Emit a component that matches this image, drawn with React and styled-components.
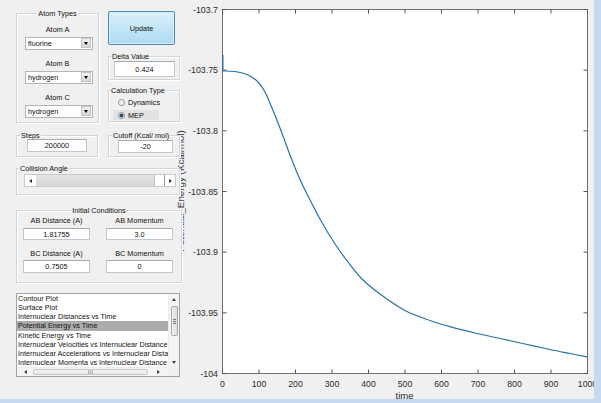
import React from 'react';
import styled, { createGlobalStyle, css } from 'styled-components';

const Global = createGlobalStyle`
  html, body { margin: 0; padding: 0; background: #f0f0f0; }
  #root { width: 601px; height: 403px; }
  *, *::before, *::after { box-sizing: border-box; }
`;

const Window = styled.div`
  width: 601px;
  height: 403px;
  background: #f0f0f0;
  border-right: 7px solid #c6d9f0;
  border-bottom: 4px solid #c6d9f0;
  display: flex;
  font-family: "Liberation Sans", Arial, sans-serif;
  font-size: 7.3px;
  color: #111;
  overflow: hidden;
`;

const Controls = styled.div`
  position: relative;
  z-index: 1;
  width: 190px;
  flex: none;
  padding: 11px 0 0 16px;
  display: flex;
  flex-direction: column;
`;

const Row = styled.div`
  display: flex;
  align-items: flex-start;
  gap: ${p => p.$gap || 0}px;
  margin-top: ${p => p.$mt || 0}px;
`;

const Column = styled.div`
  display: flex;
  flex-direction: column;
`;

const Panel = styled.div`
  width: ${p => p.$w}px;
  height: ${p => p.$h}px;
  margin-top: ${p => p.$mt || 0}px;
  border: 1px solid #d0d7dc;
  box-shadow: inset 1px 1px 0 #fff, 1px 1px 0 #fff;
  background: #f0f0f0;
  display: flex;
  flex-direction: column;
  flex: none;
`;

const Legend = styled.div`
  height: 9px;
  line-height: 9px;
  margin-top: -5px;
  align-self: ${p => (p.$center ? 'center' : 'flex-start')};
  margin-left: ${p => (p.$center ? 0 : p.$ml || 2)}px;
  padding: 0 1px;
  background: #f0f0f0;
  white-space: nowrap;
`;

const Label = styled.div`
  height: 9px;
  line-height: 9px;
  margin-top: ${p => p.$mt || 0}px;
  text-align: center;
  white-space: nowrap;
`;

const Combo = styled.div`
  width: 68px;
  height: 13px;
  margin-left: 8px;
  margin-top: 3px;
  background: #fff;
  border: 1px solid #b4b4b4;
  display: flex;
  align-items: center;
`;

const ComboText = styled.span`
  flex: 1;
  padding-left: 2px;
  line-height: 11px;
`;

const Arrow = styled.span`
  width: 0;
  height: 0;
  ${p => p.$dir === 'down' && css`
    border-left: 2.5px solid transparent;
    border-right: 2.5px solid transparent;
    border-top: 3px solid ${p.$c || '#000'};
  `}
  ${p => p.$dir === 'up' && css`
    border-left: 2.5px solid transparent;
    border-right: 2.5px solid transparent;
    border-bottom: 3px solid ${p.$c || '#000'};
  `}
  ${p => p.$dir === 'left' && css`
    border-top: 2.5px solid transparent;
    border-bottom: 2.5px solid transparent;
    border-right: 3px solid ${p.$c || '#000'};
  `}
  ${p => p.$dir === 'right' && css`
    border-top: 2.5px solid transparent;
    border-bottom: 2.5px solid transparent;
    border-left: 3px solid ${p.$c || '#000'};
  `}
`;

const ComboBtn = styled.span`
  width: 10px;
  height: 10px;
  margin-right: 1px;
  background: linear-gradient(#f2f2f2, #d6d6d6);
  border: 1px solid #c4c4c4;
  display: flex;
  align-items: center;
  justify-content: center;
`;

const Field = styled.div`
  width: ${p => p.$w}px;
  height: ${p => p.$h}px;
  margin-left: ${p => p.$ml || 0}px;
  margin-top: ${p => p.$mt || 0}px;
  background: #fff;
  border: 1px solid #c3c7cc;
  border-top-color: #a7abb0;
  display: flex;
  align-items: center;
  justify-content: center;
  white-space: nowrap;
`;

const UpdateButton = styled.button`
  width: 67px;
  height: 34px;
  padding: 0;
  margin: 0;
  border: 1px solid #4a89b8;
  border-radius: 2px;
  background: linear-gradient(#def1fb, #c3e5f7 50%, #addaf2);
  box-shadow: inset 0 0 0 1px #d9effa;
  font: inherit;
  color: #111;
`;

const RadioRow = styled.div`
  width: 46px;
  height: 10px;
  margin-left: 4px;
  margin-top: ${p => p.$mt || 0}px;
  padding-left: 5px;
  background: ${p => (p.$hl ? '#e3e3e3' : 'transparent')};
  display: flex;
  align-items: center;
  gap: 3px;
  white-space: nowrap;
`;

const Dot = styled.span`
  width: 7px;
  height: 7px;
  border-radius: 50%;
  border: 1px solid #8e8f8f;
  background: radial-gradient(circle, #e8e8e8, #fff);
  flex: none;
  ${p => p.$on && css`
    background: radial-gradient(circle, #1f3d5c 0, #2a4f78 1.4px, #cfd8e2 2.2px, #fff 3px);
  `}
`;

const Slider = styled.div`
  width: 152px;
  height: 13px;
  margin: 1px 0 0 7px;
  display: flex;
  border: 1px solid #c9c9c9;
  background: #fff;
`;

const SliderBtn = styled.div`
  width: 11px;
  flex: none;
  background: #fff;
  display: flex;
  align-items: center;
  justify-content: center;
  ${p => p.$right && css`border-left: 1px solid #9a9a9a;`}
`;

const Track = styled.div`
  flex: 1;
  background: linear-gradient(#e4e4e4, #d8d8d8);
`;

const Thumb = styled.div`
  width: 10px;
  flex: none;
  background: #fff;
  border-left: 1px solid #c0c0c0;
`;

const CondGrid = styled.div`
  display: grid;
  grid-template-columns: 67px 67px;
  column-gap: 16px;
  padding-left: 6px;
`;

const ListBox = styled.div`
  width: 164px;
  height: 84px;
  margin-top: 10px;
  border: 1px solid #9da3aa;
  background: #fff;
  display: grid;
  grid-template-columns: 151px 11px;
  grid-template-rows: 73px 9px;
  font-size: 7.2px;
  overflow: hidden;
`;

const Items = styled.div`
  display: flex;
  flex-direction: column;
  overflow: hidden;
`;

const Item = styled.div`
  height: 9.15px;
  line-height: 9.15px;
  padding-left: 1px;
  white-space: nowrap;
  overflow: hidden;
  background: ${p => (p.$sel ? '#acacac' : 'transparent')};
`;

const VScroll = styled.div`
  background: #f4f4f4;
  border-left: 1px solid #ececec;
  display: flex;
  flex-direction: column;
  align-items: center;
`;

const ScrollArrowBox = styled.div`
  width: 100%;
  height: ${p => p.$h || 10}px;
  flex: none;
  display: flex;
  align-items: center;
  justify-content: center;
`;

const VThumb = styled.div`
  width: 7px;
  height: 30px;
  margin-top: 2px;
  border: 1px solid #a9a9a9;
  border-radius: 2px;
  background: linear-gradient(90deg, #f2f2f2, #dcdcdc);
  display: flex;
  flex-direction: column;
  align-items: center;
  justify-content: center;
  gap: 1px;
`;

const Grip = styled.span`
  width: 3px;
  height: 1px;
  background: #777;
`;

const VSpacer = styled.div`
  flex: 1;
`;

const HScroll = styled.div`
  background: #f4f4f4;
  border-top: 1px solid #ececec;
  display: flex;
`;

const HBtn = styled.div`
  width: ${p => p.$w}px;
  flex: none;
  display: flex;
  align-items: center;
  justify-content: center;
`;

const HThumb = styled.div`
  flex: 1;
  margin: 1px 0;
  border: 1px solid #c8c8c8;
  border-radius: 2px;
  background: linear-gradient(#f6f6f6, #e6e6e6);
  display: flex;
  align-items: center;
  justify-content: center;
  font-size: 5px;
  letter-spacing: 0.5px;
  color: #555;
  line-height: 5px;
`;

const Corner = styled.div`
  background: #f0f0f0;
`;

const ChartSvg = styled.svg`
  flex: none;
  overflow: visible;
  font-family: "Liberation Sans", Arial, sans-serif;
`;

const curvePts = [
  [223, 71], [235, 71.5], [248, 75], [258, 82], [265, 92], [272, 108],
  [280, 128], [290, 155], [298, 175], [305, 190], [320, 219], [335, 244],
  [348, 262], [362, 279], [380, 294], [405, 310.5], [430, 320.5], [450, 326.7],
  [475, 333], [500, 338.5], [525, 344], [550, 349.5], [570, 353.5], [587, 356.8],
];

function splinePath(p) {
  let d = `M${p[0][0]},${p[0][1]}`;
  for (let i = 0; i < p.length - 1; i++) {
    const p0 = p[i - 1] || p[i];
    const p1 = p[i];
    const p2 = p[i + 1];
    const p3 = p[i + 2] || p2;
    const c1x = p1[0] + (p2[0] - p0[0]) / 6;
    const c1y = p1[1] + (p2[1] - p0[1]) / 6;
    const c2x = p2[0] - (p3[0] - p1[0]) / 6;
    const c2y = p2[1] - (p3[1] - p1[1]) / 6;
    d += ` C${c1x.toFixed(2)},${c1y.toFixed(2)} ${c2x.toFixed(2)},${c2y.toFixed(2)} ${p2[0]},${p2[1]}`;
  }
  return d;
}

const AX = { l: 222.5, r: 587.5, t: 9.5, b: 373.5 };
const yLabels = ['-103.7', '-103.75', '-103.8', '-103.85', '-103.9', '-103.95', '-104'];
const xLabels = ['0', '100', '200', '300', '400', '500', '600', '700', '800', '900', '1000'];

function Chart() {
  const xs = xLabels.map((_, i) => AX.l + i * 36.5);
  const ys = yLabels.map((_, i) => AX.t + (i * (AX.b - AX.t)) / 6);
  const tick = '#555';
  return (
    <ChartSvg width="404" height="399" viewBox="190 0 404 399">
      <rect x={AX.l} y={AX.t} width={AX.r - AX.l} height={AX.b - AX.t} fill="#fff" stroke="#707070" strokeWidth="1" />
      {xs.map((x, i) => (
        <g key={'x' + i}>
          <line x1={x} x2={x} y1={AX.b} y2={AX.b - 4} stroke={tick} strokeWidth="1" />
          <line x1={x} x2={x} y1={AX.t} y2={AX.t + 4} stroke={tick} strokeWidth="1" />
          <text x={x} y="386.5" fontSize="8.7" fill="#2b2b2b" textAnchor="middle">{xLabels[i]}</text>
        </g>
      ))}
      {ys.map((y, i) => (
        <g key={'y' + i}>
          <line x1={AX.l} x2={AX.l + 4} y1={y} y2={y} stroke={tick} strokeWidth="1" />
          <line x1={AX.r} x2={AX.r - 4} y1={y} y2={y} stroke={tick} strokeWidth="1" />
          <text x="218" y={y + 3} fontSize="8.8" fill="#2b2b2b" textAnchor="end">{yLabels[i]}</text>
        </g>
      ))}
      <text x="404.5" y="398.5" fontSize="9.5" fill="#2b2b2b" textAnchor="middle">time</text>
      <text
        x="184"
        y="191"
        fontSize="9.8"
        fill="#3a3a3a"
        textAnchor="middle"
        transform="rotate(-90 184 191)"
      >
        Potential_Energy (Kcal/mol)
      </text>
      <path d="M222.9,55 L222.9,71" stroke="#2571aa" strokeWidth="1.2" fill="none" />
      <path d={splinePath(curvePts)} stroke="#2571aa" strokeWidth="1.2" fill="none" />
    </ChartSvg>
  );
}

const atoms = [
  ['Atom A', 'fluorine'],
  ['Atom B', 'hydrogen'],
  ['Atom C', 'hydrogen'],
];

const plots = [
  'Contour Plot',
  'Surface Plot',
  'Internuclear Distances vs Time',
  'Potential Energy vs Time',
  'Kinetic Energy vs Time',
  'Internuclear Velocities vs Internuclear Distance',
  'Internuclear Accelerations vs Internuclear Distance',
  'Internuclear Momenta vs Internuclear Distance',
];

export default function App() {
  return (
    <>
      <Global />
      <Window>
        <Controls>
          <Row $gap={9}>
            <Panel $w={83} $h={110} $mt={2}>
              <Legend $center>Atom Types</Legend>
              {atoms.map(([label, value], i) => (
                <React.Fragment key={label}>
                  <Label $mt={i === 0 ? 6.5 : 9}>{label}</Label>
                  <Combo>
                    <ComboText>{value}</ComboText>
                    <ComboBtn><Arrow $dir="down" /></ComboBtn>
                  </Combo>
                </React.Fragment>
              ))}
            </Panel>
            <Column>
              <UpdateButton>Update</UpdateButton>
              <Panel $w={72} $h={24} $mt={11}>
                <Legend $ml={2}>Delta Value</Legend>
                <Field $w={61} $h={16} $ml={5}>0.424</Field>
              </Panel>
              <Panel $w={72} $h={32} $mt={10}>
                <Legend $ml={1}>Calculation Type</Legend>
                <RadioRow $mt={2}><Dot />Dynamics</RadioRow>
                <RadioRow $mt={3} $hl><Dot $on />MEP</RadioRow>
              </Panel>
            </Column>
          </Row>

          <Row $gap={10} $mt={12}>
            <Panel $w={82} $h={22}>
              <Legend $ml={3}>Steps</Legend>
              <Field $w={60} $h={13} $ml={10} $mt={-1}>200000</Field>
            </Panel>
            <Panel $w={72} $h={22}>
              <Legend $ml={3}>Cutoff (Kcal/ mol)</Legend>
              <Field $w={55} $h={13} $ml={9}>-20</Field>
            </Panel>
          </Row>

          <Panel $w={164} $h={27} $mt={11}>
            <Legend $ml={2}>Collision Angle</Legend>
            <Slider>
              <SliderBtn><Arrow $dir="left" $c="#333" /></SliderBtn>
              <Track />
              <Thumb />
              <SliderBtn $right><Arrow $dir="right" $c="#333" /></SliderBtn>
            </Slider>
          </Panel>

          <Panel $w={166} $h={73} $mt={15}>
            <Legend $center>Initial Conditions</Legend>
            <CondGrid>
              <Label $mt={0.5}>AB Distance (A)</Label>
              <Label $mt={0.5}>AB Momentum</Label>
              <Field $w={67} $h={12} $mt={3.5}>1.81755</Field>
              <Field $w={67} $h={12} $mt={3.5}>3.0</Field>
              <Label $mt={8.5}>BC Distance (A)</Label>
              <Label $mt={8.5}>BC Momentum</Label>
              <Field $w={67} $h={13} $mt={2.5}>0.7505</Field>
              <Field $w={67} $h={13} $mt={2.5}>0</Field>
            </CondGrid>
          </Panel>

          <ListBox>
            <Items>
              {plots.map((p, i) => (
                <Item key={p} $sel={i === 3}>{p}</Item>
              ))}
            </Items>
            <VScroll>
              <ScrollArrowBox $h={10}><Arrow $dir="up" $c="#444" /></ScrollArrowBox>
              <VThumb><Grip /><Grip /><Grip /></VThumb>
              <VSpacer />
              <ScrollArrowBox $h={10}><Arrow $dir="down" $c="#444" /></ScrollArrowBox>
            </VScroll>
            <HScroll>
              <HBtn $w={16}><Arrow $dir="left" $c="#444" /></HBtn>
              <HThumb>III</HThumb>
              <HBtn $w={20}><Arrow $dir="right" $c="#444" /></HBtn>
            </HScroll>
            <Corner />
          </ListBox>
        </Controls>
        <Chart />
      </Window>
    </>
  );
}
